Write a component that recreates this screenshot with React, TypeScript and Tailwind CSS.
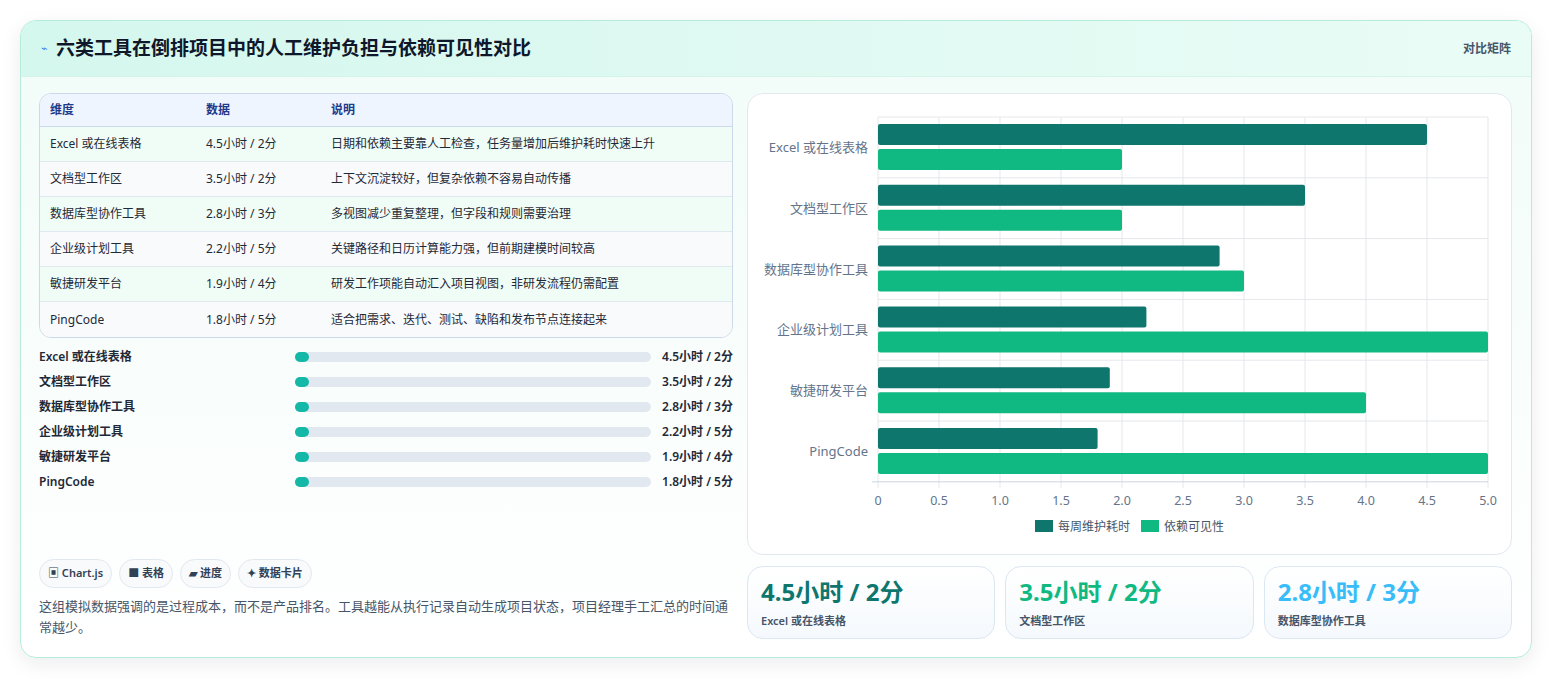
import React from "react";

const rows = [
  { name: "Excel 或在线表格", h: 4.5, v: 2, note: "日期和依赖主要靠人工检查，任务量增加后维护耗时快速上升" },
  { name: "文档型工作区", h: 3.5, v: 2, note: "上下文沉淀较好，但复杂依赖不容易自动传播" },
  { name: "数据库型协作工具", h: 2.8, v: 3, note: "多视图减少重复整理，但字段和规则需要治理" },
  { name: "企业级计划工具", h: 2.2, v: 5, note: "关键路径和日历计算能力强，但前期建模时间较高" },
  { name: "敏捷研发平台", h: 1.9, v: 4, note: "研发工作项能自动汇入项目视图，非研发流程仍需配置" },
  { name: "PingCode", h: 1.8, v: 5, note: "适合把需求、迭代、测试、缺陷和发布节点连接起来" },
];

const Chart = () => {
  const x0 = 130;
  const sc = 122;
  const top = 23;
  const rh = 60.8;
  const ticks = [0, 0.5, 1, 1.5, 2, 2.5, 3, 3.5, 4, 4.5, 5];
  return (
    <svg width="764" height="461" className="block">
      {ticks.map((t) => (
        <line key={t} x1={x0 + t * sc} x2={x0 + t * sc} y1={top} y2={top + 6 * rh + 6} stroke="#e5e7eb" />
      ))}
      {rows.map((_, i) => (
        <line key={i} x1={x0} x2={x0 + 5 * sc} y1={top + i * rh} y2={top + i * rh} stroke="#e5e7eb" />
      ))}
      <line x1={x0 - 6} x2={x0 + 5 * sc} y1={top + 6 * rh} y2={top + 6 * rh} stroke="#cbd5e1" />
      {rows.map((r, i) => {
        const y = top + i * rh;
        return (
          <g key={r.name}>
            <rect x={x0} y={y + 7} width={r.h * sc} height={21} rx={2} fill="#0f766e" />
            <rect x={x0} y={y + 32} width={r.v * sc} height={21} rx={2} fill="#10b981" />
            <text x={x0 - 10} y={y + 35} textAnchor="end" fontSize="13" fill="#64748b">{r.name}</text>
          </g>
        );
      })}
      {ticks.map((t) => (
        <text key={t} x={x0 + t * sc} y={411} textAnchor="middle" fontSize="12.5" fill="#64748b">
          {t === 0 ? "0" : t.toFixed(1)}
        </text>
      ))}
      <rect x={287} y={426} width={18} height={12} fill="#0f766e" />
      <text x={310} y={437} fontSize="12" fill="#475569">每周维护耗时</text>
      <rect x={393} y={426} width={18} height={12} fill="#10b981" />
      <text x={416} y={437} fontSize="12" fill="#475569">依赖可见性</text>
    </svg>
  );
};

const App = () => {
  return (
    <div
      className="w-[1552px] h-[679px] bg-white pt-[20px] pl-[20px]"
      style={{ fontFamily: '"Noto Sans", "Noto Sans CJK SC", sans-serif' }}
    >
      <div className="w-[1512px] h-[638px] rounded-2xl border border-[#b5ecdc] overflow-hidden shadow-[0_6px_20px_rgba(15,23,42,0.08)] bg-gradient-to-b from-[#f1fcf8] to-white flex flex-col">
        <div className="h-[56px] flex items-center justify-between px-[20px] bg-gradient-to-r from-[#d4f7ee] to-[#eafcf6] border-b border-[#d6f3ea]">
          <div className="flex items-center gap-2">
            <span className="text-[11px] text-[#3b82f6]">⌁</span>
            <h1 className="text-[19px] font-bold text-[#0f172a]">六类工具在倒排项目中的人工维护负担与依赖可见性对比</h1>
          </div>
          <span className="text-xs font-semibold text-[#475569]">对比矩阵</span>
        </div>
        <div className="flex gap-[14px] px-[18px] pt-[16px]">
          <div className="w-[694px] flex flex-col">
            <div className="rounded-xl border border-[#cbd9ea] overflow-hidden text-xs">
              <div className="flex h-[33px] items-center bg-[#eef5fe] border-b border-[#cbd9ea] text-[#1e3a8a] font-semibold">
                <div className="w-[166px] pl-[10px]">维度</div>
                <div className="w-[125px]">数据</div>
                <div>说明</div>
              </div>
              {rows.map((r, i) => (
                <div
                  key={r.name}
                  className={`flex h-[35px] items-center text-[#1f2937] ${i < 5 ? "border-b border-[#e2e8f0]" : ""} ${i % 2 === 0 ? "bg-[#f0fdf6]" : "bg-[#f8fafc]"}`}
                >
                  <div className="w-[166px] pl-[10px]">{r.name}</div>
                  <div className="w-[125px]">{r.h}小时 / {r.v}分</div>
                  <div>{r.note}</div>
                </div>
              ))}
            </div>
            <div className="flex flex-col gap-[7px] mt-[10px]">
              {rows.map((r) => (
                <div key={r.name} className="flex items-center h-[18px] text-xs font-semibold text-[#1f2937]">
                  <div className="w-[256px]">{r.name}</div>
                  <div className="w-[356px] h-[10px] rounded-full bg-[#e2e8f0] relative">
                    <div className="w-[14px] h-[10px] rounded-full bg-[#14b8a6]" />
                  </div>
                  <div className="flex-1 text-right">{r.h}小时 / {r.v}分</div>
                </div>
              ))}
            </div>
            <div className="flex gap-[7px] mt-[68px] text-[11px] font-semibold text-[#334155]">
              {["▣ Chart.js", "■ 表格", "▰ 进度", "✦ 数据卡片"].map((c) => (
                <span key={c} className="h-[29px] px-[8px] flex items-center rounded-full border border-[#e2e8f0] bg-[#f8fafc]">{c}</span>
              ))}
            </div>
            <p className="mt-[8px] text-[13px] leading-[21px] text-[#475569]">
              这组模拟数据强调的是过程成本，而不是产品排名。工具越能从执行记录自动生成项目状态，项目经理手工汇总的时间通常越少。
            </p>
          </div>
          <div className="w-[765px] flex flex-col gap-[11px]">
            <div className="h-[462px] rounded-2xl border border-[#e2e8f0] bg-white">
              <Chart />
            </div>
            <div className="grid grid-cols-3 gap-[10px]">
              {[
                { r: rows[0], c: "text-[#0f766e]" },
                { r: rows[1], c: "text-[#10b981]" },
                { r: rows[2], c: "text-[#38bdf8]" },
              ].map(({ r, c }) => (
                <div key={r.name} className="h-[73px] rounded-2xl border border-[#dbe7f3] bg-gradient-to-b from-white to-[#f5f9fd] px-[13px] pt-[10px]">
                  <div className={`text-[24px] leading-[30px] font-bold ${c}`}>{r.h}小时 / {r.v}分</div>
                  <div className="text-[11px] font-semibold text-[#475569] mt-[6px]">{r.name}</div>
                </div>
              ))}
            </div>
          </div>
        </div>
      </div>
    </div>
  );
};

export default App;
